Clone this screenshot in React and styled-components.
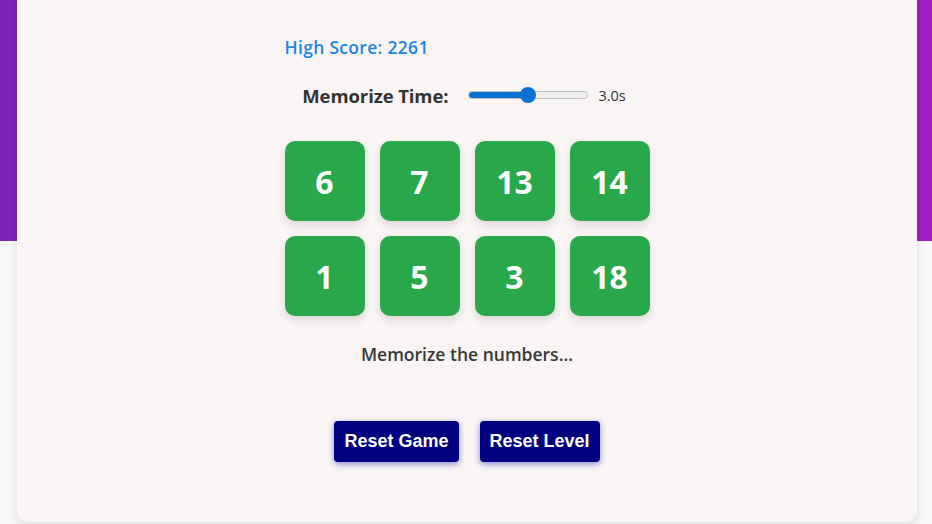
import React, { useState } from "react";
import styled, { createGlobalStyle } from "styled-components";

const Global = createGlobalStyle`
  html, body { margin: 0; padding: 0; }
  body {
    background: #f7f7f7;
    font-family: "Open Sans", "Noto Sans", sans-serif;
    overflow: hidden;
  }
`;

const Page = styled.div`
  width: 932px;
  height: 524px;
  overflow: hidden;
`;

const Hero = styled.div`
  height: 241px;
  background: linear-gradient(90deg, #7a25b6 0%, #a11fc1 100%);
`;

const Card = styled.div`
  width: 900px;
  margin: -261px 0 0 17px;
  height: 542px;
  box-sizing: border-box;
  padding-top: 55px;
  background: #f9f5f5;
  border-radius: 10px;
  box-shadow: 0 2px 8px rgba(0, 0, 0, 0.12);
  display: flex;
  flex-direction: column;
  align-items: center;
`;

const Column = styled.div`
  width: 365px;
  display: flex;
  flex-direction: column;
  align-items: center;
`;

const HighScore = styled.div`
  align-self: flex-start;
  font-size: 17.5px;
  font-weight: 600;
  line-height: 24px;
  color: #1e84e6;
  letter-spacing: 0.3px;
`;

const TimeRow = styled.div`
  display: flex;
  align-items: center;
  margin-top: 24px;
  height: 24px;
  margin-left: -6px;
`;

const TimeLabel = styled.span`
  font-size: 18.5px;
  font-weight: 700;
  color: #333;
  margin-right: 20px;
  letter-spacing: -0.1px;
`;

const Range = styled.input`
  -webkit-appearance: none;
  appearance: none;
  width: 120px;
  height: 8px;
  margin: 0 10px 0 0;
  border-radius: 4px;
  border: 1px solid #bdbdbd;
  box-sizing: border-box;
  background: #efefef;
  outline: none;
  &::-webkit-slider-thumb {
    -webkit-appearance: none;
    width: 16px;
    height: 16px;
    border-radius: 50%;
    background: #0b72d3;
    border: none;
  }
`;

const TimeValue = styled.span`
  font-size: 14.5px;
  font-weight: 500;
  color: #333;
`;

const Grid = styled.div`
  display: grid;
  grid-template-columns: repeat(4, 80px);
  grid-auto-rows: 80px;
  gap: 15px;
  margin-top: 34px;
`;

const Tile = styled.div`
  background: #29a84a;
  border-radius: 10px;
  display: flex;
  align-items: center;
  justify-content: center;
  color: #fff;
  font-size: 32px;
  font-weight: 700;
  box-shadow: 0 4px 10px rgba(0, 0, 0, 0.12);
`;

const Message = styled.div`
  margin-top: 26px;
  font-size: 17.5px;
  font-weight: 600;
  color: #383838;
  line-height: 24px;
`;

const Buttons = styled.div`
  display: flex;
  gap: 21px;
  margin-top: 55px;
`;

const Button = styled.button`
  height: 41px;
  padding: 0 10px;
  border: none;
  border-radius: 4px;
  background: #000080;
  color: #fff;
  font-family: "Liberation Sans", Arial, sans-serif;
  font-weight: 700;
  font-size: 18px;
  box-shadow: 0 2px 6px rgba(0, 0, 160, 0.45);
  cursor: pointer;
`;

const numbers = [6, 7, 13, 14, 1, 5, 3, 18];

export default function App() {
  const [time, setTime] = useState(3);
  const pct = ((time - 1) / 4) * 100;
  return (
    <Page>
      <Global />
      <Hero />
      <Card>
        <Column>
          <HighScore>High Score: 2261</HighScore>
          <TimeRow>
            <TimeLabel>Memorize Time:</TimeLabel>
            <Range
              type="range"
              min="1"
              max="5"
              step="0.5"
              value={time}
              onChange={(e) => setTime(parseFloat(e.target.value))}
              style={{
                background: `linear-gradient(90deg, #0b72d3 0%, #0b72d3 ${pct}%, #efefef ${pct}%, #efefef 100%)`,
              }}
            />
            <TimeValue>{time.toFixed(1)}s</TimeValue>
          </TimeRow>
          <Grid>
            {numbers.map((n, i) => (
              <Tile key={i}>{n}</Tile>
            ))}
          </Grid>
          <Message>Memorize the numbers...</Message>
          <Buttons>
            <Button>Reset Game</Button>
            <Button>Reset Level</Button>
          </Buttons>
        </Column>
      </Card>
    </Page>
  );
}
